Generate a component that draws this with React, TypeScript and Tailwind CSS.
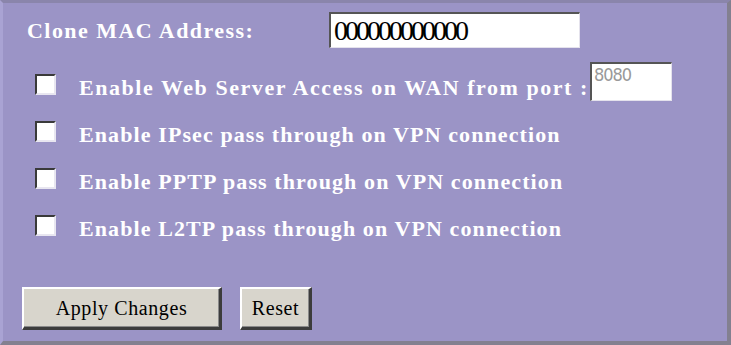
const serif = { fontFamily: '"Liberation Serif", "Times New Roman", serif' };

const rows = [
  "Enable IPsec pass through on VPN connection",
  "Enable PPTP pass through on VPN connection",
  "Enable L2TP pass through on VPN connection",
];

const Checkbox = ({ className = "" }: { className?: string }) => (
  <div
    className={`w-[21px] h-[21px] shrink-0 border-t-2 border-l-2 border-t-[#3a3a3a] border-l-[#3a3a3a] border-b-2 border-r-2 border-b-[#e8e6f0] border-r-[#e8e6f0] bg-white ${className}`}
  />
);

const Button = ({ label, width }: { label: string; width: string }) => (
  <button
    className={`${width} h-[43px] bg-[#d8d5cc] text-black text-[20px] tracking-[0.6px] border-t-2 border-l-2 border-t-white border-l-white border-b-[3px] border-r-[3px] border-b-[#3c3c3c] border-r-[#3c3c3c] shadow-[inset_-1px_-1px_0_#8a8a8a]`}
    style={serif}
  >
    {label}
  </button>
);

export default function App() {
  return (
    <div
      className="w-[731px] h-[345px] bg-[#9b94c6] border-t-[3px] border-t-[#8a85ab] border-r-4 border-r-[#838090] border-b-4 border-b-[#838090] border-l-[3px] border-l-[#a9a3d3] text-white"
      style={serif}
    >
      <div className="flex items-center h-[36px] mt-[9px] pl-[24px]">
        <span className="w-[302px] font-bold text-[22px] tracking-[1.45px]">Clone MAC Address:</span>
        <div className="w-[251px] h-[36px] bg-white border-t-2 border-l-2 border-t-[#555] border-l-[#555] border-b border-r border-b-[#e4e2ec] border-r-[#e4e2ec] flex items-center pl-[3px] overflow-hidden">
          <span className="text-black text-[28px] tracking-[-3px] leading-none">000000000000</span>
        </div>
      </div>

      <div className="flex items-start h-[39px] mt-[14px] pl-[32px]">
        <Checkbox className="mt-[12px]" />
        <span className="mt-[12px] ml-[23px] font-bold text-[22px] leading-[21px] tracking-[1.55px] whitespace-nowrap pt-[3px]">
          Enable Web Server Access on WAN from port :
        </span>
        <div className="ml-[1px] w-[82px] h-[39px] bg-white border-t-2 border-l-2 border-t-[#555] border-l-[#555] border-b border-r border-b-[#e4e2ec] border-r-[#e4e2ec] pl-[2px]">
          <span
            className="text-[#999] text-[18px] leading-[18px] tracking-[-1px]"
            style={{ fontFamily: '"DejaVu Sans Condensed", "Liberation Sans", sans-serif' }}
          >
            8080
          </span>
        </div>
      </div>

      <div className="flex flex-col gap-[26px] mt-[20px] pl-[32px]">
        {rows.map((r) => (
          <div key={r} className="flex items-start h-[21px]">
            <Checkbox />
            <span className="ml-[23px] font-bold text-[22px] leading-[21px] tracking-[1.1px] whitespace-nowrap pt-[3px]">{r}</span>
          </div>
        ))}
      </div>

      <div className="flex gap-[18px] mt-[51px] pl-[19px]">
        <Button label="Apply Changes" width="w-[200px]" />
        <Button label="Reset" width="w-[72px]" />
      </div>
    </div>
  );
}
